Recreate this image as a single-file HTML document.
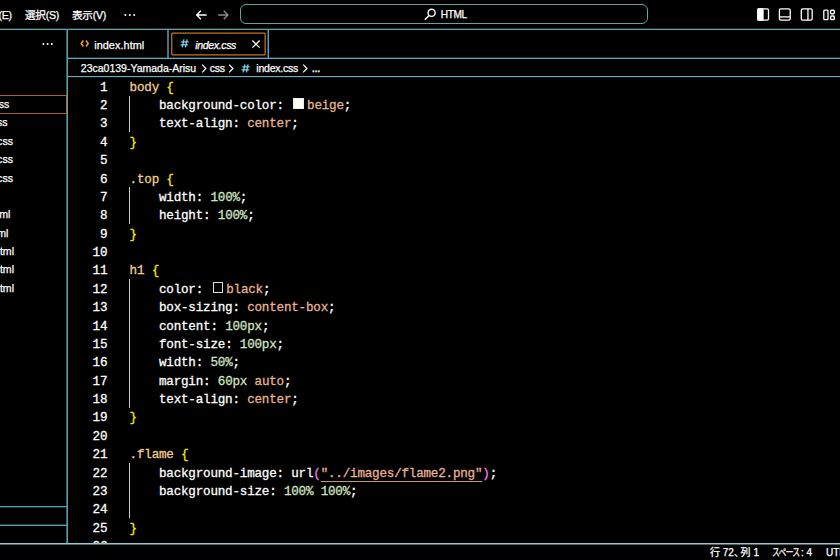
<!DOCTYPE html>
<html lang="ja">
<head>
<meta charset="utf-8">
<title>index.css - HTML - Visual Studio Code</title>
<style>
*{box-sizing:border-box;margin:0;padding:0}
html,body{width:840px;height:560px;background:#000;overflow:hidden}
body{position:relative;color:#fff;-webkit-text-stroke:0.25px;font-family:"Liberation Sans","Noto Sans CJK JP",sans-serif;font-size:10.6px;-webkit-font-smoothing:antialiased}
.abs{position:absolute;white-space:nowrap}
/* title bar */
.menu{top:8px;line-height:14px;font-size:10.6px;letter-spacing:-0.25px}
.search{position:absolute;left:240.1px;top:4px;width:408px;height:20px;border:1px solid #6a9fa4;border-radius:6px}
/* misc */
.sbi{font-size:10.6px;line-height:18px}
.bc{top:61.4px;line-height:14px;font-size:10.5px}
.st{top:545.9px;line-height:14px;font-size:10px}
/* editor */
#ed{position:absolute;left:68px;top:0;width:772px;height:543px;overflow:hidden}
.ln,.cl{position:absolute;height:18.375px;line-height:18.375px;font-family:"Liberation Mono",monospace;font-size:12.6px;letter-spacing:-0.21px;white-space:pre;margin-top:2.05px;-webkit-text-stroke:0.28px}
.ln{left:0;width:39.3px;text-align:right;color:#fff}
.cl{left:61.6px;color:#fff}
.sel{color:#efd08e}.b1{color:#ffe600}.b2{color:#e680e2}.p{color:#fff}.v{color:#e8b494}.n{color:#d0e4c2}.f{color:#fff}
.u{color:#e8b494;text-decoration:underline;text-decoration-thickness:1.3px;text-underline-offset:4px;text-decoration-color:#c9967e}
.sw{display:inline-block;width:10.8px;height:10.8px;margin:0 3.1px 0 1.9px;vertical-align:0.2px;border:0.6px solid #eee}
.swb{background:#000;border:1.1px solid #ddd;width:10.4px;height:11px;margin:0 3.2px 0 2.2px;vertical-align:-0.5px}
.ig{position:absolute;left:61px;width:1px;background:#c8c8c8;margin-top:0.6px}
</style>
</head>
<body>
<svg class="abs" style="left:0;top:0" width="840" height="560" viewBox="0 0 840 560">
<g fill="#60a6b8">
<rect x="0" y="28.7" width="840" height="1.3" fill="#6a9fa8"/>
<rect x="66.4" y="29" width="1.6" height="515" fill="#5c9cae"/>
<rect x="0" y="506" width="67" height="1.3" fill="#58a2b2"/>
<rect x="0" y="524.6" width="67" height="1.4" fill="#58a2b2"/>
<rect x="167.3" y="29" width="1.4" height="29"/>
<rect x="267.55" y="29" width="1.4" height="29"/>
<rect x="67" y="57.7" width="773" height="1.3" fill="#5caaba"/>
<rect x="67" y="76" width="773" height="1.15" fill="#69aabe"/>
<rect x="0" y="543" width="840" height="1.5" fill="#8ccdcf"/>
</g>
<rect x="-2" y="95.5" width="68.5" height="18" fill="none" stroke="#c06f18" stroke-width="0.9"/>
<rect x="171.75" y="33.05" width="93.4" height="21.9" rx="0.8" fill="none" stroke="#c47518" stroke-width="1.25"/>
</svg>
<!-- title bar -->
<div class="abs menu" style="left:-1.6px">(E)</div>
<div class="abs menu" style="left:25px">選択(S)</div>
<div class="abs menu" style="left:72px">表示(V)</div>
<svg class="abs" style="left:124px;top:13px" width="12" height="4" viewBox="0 0 12 4"><circle cx="1.4" cy="2" r="1" fill="#fff"/><circle cx="5.8" cy="2" r="1" fill="#fff"/><circle cx="10.2" cy="2" r="1" fill="#fff"/></svg>
<svg class="abs" style="left:195px;top:9px" width="13" height="12" viewBox="0 0 13 12"><path d="M11.7 6H1.8M5.9 1.7L1.6 6L5.9 10.3" fill="none" stroke="#fff" stroke-width="1.3"/></svg>
<svg class="abs" style="left:217px;top:9px" width="13" height="12" viewBox="0 0 13 12"><path d="M1.2 6H10.8M6.7 1.7L11 6L6.7 10.3" fill="none" stroke="#8c8c8c" stroke-width="1.3"/></svg>
<div class="search"></div>
<svg class="abs" style="left:424px;top:8px" width="13" height="13" viewBox="0 0 13 13"><circle cx="7.6" cy="4.8" r="3.55" fill="none" stroke="#fff" stroke-width="1.4"/><path d="M5 7.5L0.8 11.7" stroke="#fff" stroke-width="1.45" fill="none"/></svg>
<div class="abs" style="left:440.8px;top:7.9px;line-height:14px;font-size:10.1px;letter-spacing:-0.35px">HTML</div>
<!-- layout icons -->
<svg class="abs" style="left:756px;top:7px" width="84" height="15" viewBox="0 0 84 15">
<g fill="none" stroke="#fff" stroke-width="1.3">
<rect x="1.8" y="1.95" width="10.7" height="11.1" rx="1.4"/><rect x="1.8" y="1.95" width="5.2" height="11.1" rx="0.6" fill="#fff"/>
<rect x="23.4" y="1.95" width="10.8" height="11.1" rx="1.4"/><path d="M23.4 9.9H34.2"/>
<rect x="45.3" y="1.95" width="10.9" height="11.1" rx="1.4"/><path d="M51.95 1.95V13.05"/>
<rect x="67.8" y="3.15" width="4.2" height="9.4" rx="0.9"/><rect x="74.6" y="3.2" width="3.7" height="3.5" rx="0.9" stroke-width="1.4"/><rect x="74.6" y="9.05" width="3.7" height="3.5" rx="0.9" stroke-width="1.4"/>
</g></svg>
<!-- sidebar -->
<svg class="abs" style="left:42px;top:42px" width="12" height="4" viewBox="0 0 12 4"><circle cx="1.4" cy="2" r="1" fill="#fff"/><circle cx="5.6" cy="2" r="1" fill="#fff"/><circle cx="9.8" cy="2" r="1" fill="#fff"/></svg>
<div id="sb">
<div class="abs sbi" style="top:95.0px;right:830.6px">css</div>
<div class="abs sbi" style="top:113.4px;right:832.5px">css</div>
<div class="abs sbi" style="top:131.8px;right:827px">css</div>
<div class="abs sbi" style="top:150.1px;right:827px">css</div>
<div class="abs sbi" style="top:168.5px;right:827px">css</div>
<div class="abs sbi" style="top:205.3px;right:829.6px">html</div>
<div class="abs sbi" style="top:223.6px;right:831.6px">html</div>
<div class="abs sbi" style="top:242.0px;right:826px">html</div>
<div class="abs sbi" style="top:260.4px;right:826px">html</div>
<div class="abs sbi" style="top:278.8px;right:826px">html</div>
</div>
<!-- tabs -->
<svg class="abs" style="left:79.7px;top:39.4px" width="10" height="9" viewBox="0 0 10 9"><path d="M3.4 1.5L1.2 4.5L3.4 7.5M6 1.5L8.2 4.5L6 7.5" fill="none" stroke="#f8963a" stroke-width="1.5"/></svg>
<div class="abs" style="left:94.2px;top:38.1px;line-height:14px;font-size:10.9px;letter-spacing:0.05px">index.html</div>
<svg class="abs" style="left:179.9px;top:39.2px" width="9" height="9" viewBox="0 0 9 9"><path d="M3.9 0.3L2.2 8.3M7.1 0.3L5.4 8.3M1.3 2.8H8.6M0.6 5.8H7.9" fill="none" stroke="#80cff0" stroke-width="1.25"/></svg>
<div class="abs" style="left:195.3px;top:37.9px;line-height:14px;font-size:10.6px;font-style:italic;letter-spacing:-0.38px">index.css</div>
<svg class="abs" style="left:251px;top:39px" width="10" height="10" viewBox="0 0 10 10"><path d="M1.4 1.5L8.6 8.7M8.6 1.5L1.4 8.7" stroke="#fff" stroke-width="1.2" fill="none"/></svg>
<!-- breadcrumbs -->
<div class="abs bc" style="left:80.8px">23ca0139-Yamada-Arisu</div>
<svg class="abs" style="left:200.5px;top:64px" width="7" height="9" viewBox="0 0 7 9"><path d="M1.2 0.7L4.9 4.5L1.2 8.3" fill="none" stroke="#fff" stroke-width="1.2"/></svg>
<div class="abs bc" style="left:209.8px;letter-spacing:-0.3px">css</div>
<svg class="abs" style="left:228px;top:64px" width="7" height="9" viewBox="0 0 7 9"><path d="M1.2 0.7L4.9 4.5L1.2 8.3" fill="none" stroke="#fff" stroke-width="1.2"/></svg>
<svg class="abs" style="left:241.1px;top:64px" width="9" height="9" viewBox="0 0 9 9"><path d="M3.9 0.3L2.2 8.3M7.1 0.3L5.4 8.3M1.3 2.8H8.6M0.6 5.8H7.9" fill="none" stroke="#80cff0" stroke-width="1.25"/></svg>
<div class="abs bc" style="left:256.3px;letter-spacing:-0.22px">index.css</div>
<svg class="abs" style="left:301.5px;top:64px" width="7" height="9" viewBox="0 0 7 9"><path d="M1.2 0.7L4.9 4.5L1.2 8.3" fill="none" stroke="#fff" stroke-width="1.2"/></svg>
<div class="abs bc" style="left:311.8px;top:62.4px;font-size:8.6px;font-weight:bold">…</div>
<!-- editor -->
<div id="ed">
<div class="ln" style="top:76.600px">1</div><div class="cl" style="top:76.600px"><span class="sel">body</span><span class="w"> </span><span class="b1">{</span></div>
<div class="ln" style="top:94.975px">2</div><div class="cl" style="top:94.975px"><span class="w">    </span><span class="p">background-color</span><span class="w">: </span><i class="sw" style="background:#fbfbee"></i><span class="v">beige</span><span class="w">;</span></div>
<div class="ln" style="top:113.350px">3</div><div class="cl" style="top:113.350px"><span class="w">    </span><span class="p">text-align</span><span class="w">: </span><span class="v">center</span><span class="w">;</span></div>
<div class="ln" style="top:131.725px">4</div><div class="cl" style="top:131.725px"><span class="b1">}</span></div>
<div class="ln" style="top:150.100px">5</div><div class="cl" style="top:150.100px"></div>
<div class="ln" style="top:168.475px">6</div><div class="cl" style="top:168.475px"><span class="sel">.top</span><span class="w"> </span><span class="b1">{</span></div>
<div class="ln" style="top:186.850px">7</div><div class="cl" style="top:186.850px"><span class="w">    </span><span class="p">width</span><span class="w">: </span><span class="n">100%</span><span class="w">;</span></div>
<div class="ln" style="top:205.225px">8</div><div class="cl" style="top:205.225px"><span class="w">    </span><span class="p">height</span><span class="w">: </span><span class="n">100%</span><span class="w">;</span></div>
<div class="ln" style="top:223.600px">9</div><div class="cl" style="top:223.600px"><span class="b1">}</span></div>
<div class="ln" style="top:241.975px">10</div><div class="cl" style="top:241.975px"></div>
<div class="ln" style="top:260.350px">11</div><div class="cl" style="top:260.350px"><span class="sel">h1</span><span class="w"> </span><span class="b1">{</span></div>
<div class="ln" style="top:278.725px">12</div><div class="cl" style="top:278.725px"><span class="w">    </span><span class="p">color</span><span class="w">: </span><i class="sw swb"></i><span class="v">black</span><span class="w">;</span></div>
<div class="ln" style="top:297.100px">13</div><div class="cl" style="top:297.100px"><span class="w">    </span><span class="p">box-sizing</span><span class="w">: </span><span class="v">content-box</span><span class="w">;</span></div>
<div class="ln" style="top:315.475px">14</div><div class="cl" style="top:315.475px"><span class="w">    </span><span class="p">content</span><span class="w">: </span><span class="n">100px</span><span class="w">;</span></div>
<div class="ln" style="top:333.850px">15</div><div class="cl" style="top:333.850px"><span class="w">    </span><span class="p">font-size</span><span class="w">: </span><span class="n">100px</span><span class="w">;</span></div>
<div class="ln" style="top:352.225px">16</div><div class="cl" style="top:352.225px"><span class="w">    </span><span class="p">width</span><span class="w">: </span><span class="n">50%</span><span class="w">;</span></div>
<div class="ln" style="top:370.600px">17</div><div class="cl" style="top:370.600px"><span class="w">    </span><span class="p">margin</span><span class="w">: </span><span class="n">60px</span><span class="w"> </span><span class="v">auto</span><span class="w">;</span></div>
<div class="ln" style="top:388.975px">18</div><div class="cl" style="top:388.975px"><span class="w">    </span><span class="p">text-align</span><span class="w">: </span><span class="v">center</span><span class="w">;</span></div>
<div class="ln" style="top:407.350px">19</div><div class="cl" style="top:407.350px"><span class="b1">}</span></div>
<div class="ln" style="top:425.725px">20</div><div class="cl" style="top:425.725px"></div>
<div class="ln" style="top:444.100px">21</div><div class="cl" style="top:444.100px"><span class="sel">.flame</span><span class="w"> </span><span class="b1">{</span></div>
<div class="ln" style="top:462.475px">22</div><div class="cl" style="top:462.475px"><span class="w">    </span><span class="p">background-image</span><span class="w">: </span><span class="f">url</span><span class="b2">(</span><span class="u">&quot;../images/flame2.png&quot;</span><span class="b2">)</span><span class="w">;</span></div>
<div class="ln" style="top:480.850px">23</div><div class="cl" style="top:480.850px"><span class="w">    </span><span class="p">background-size</span><span class="w">: </span><span class="n">100%</span><span class="w"> </span><span class="n">100%</span><span class="w">;</span></div>
<div class="ln" style="top:499.225px">24</div><div class="cl" style="top:499.225px"></div>
<div class="ln" style="top:517.600px">25</div><div class="cl" style="top:517.600px"><span class="b1">}</span></div>
<div class="ln" style="top:535.975px">26</div><div class="cl" style="top:535.975px"></div>
<div class="ig" style="top:94.975px;height:36.750px"></div><div class="ig" style="top:186.850px;height:36.750px"></div><div class="ig" style="top:278.725px;height:128.625px"></div><div class="ig" style="top:462.475px;height:55.125px"></div>
</div>
<!-- status bar -->
<div class="abs st" style="left:710px">行 72<span style="letter-spacing:-3.3px">、</span>列 1</div>
<div class="abs st" style="left:771.5px;letter-spacing:-0.9px;transform:scaleX(0.78);transform-origin:0 50%">スペース</div>
<div class="abs st" style="left:801px">: 4</div>
<div class="abs st" style="left:826px">UTF-8</div>
</body>
</html>
